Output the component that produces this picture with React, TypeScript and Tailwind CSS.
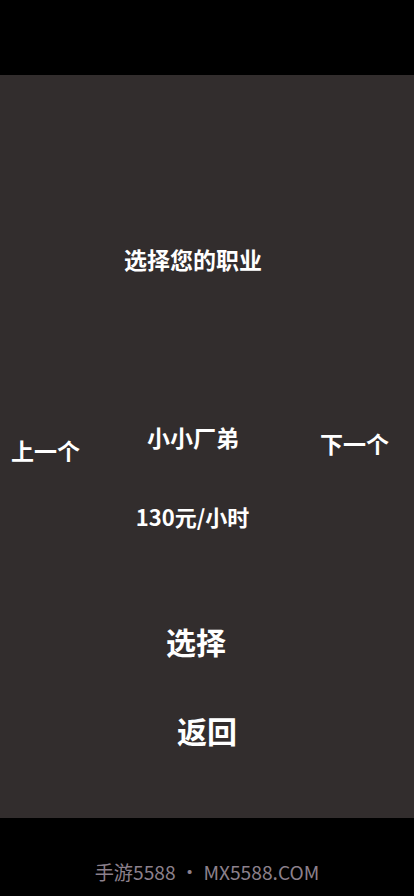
import React from "react";

const cjk = { fontFamily: '"Noto Sans CJK SC", "Noto Sans", sans-serif' };

export default function App() {
  return (
    <div className="w-[414px] h-[896px] bg-black flex flex-col overflow-hidden" style={cjk}>
      <div className="h-[75px] bg-black shrink-0" />
      <div className="h-[743px] bg-[#322d2d] shrink-0 flex flex-col text-white font-bold">
        <div className="mt-[173px] flex justify-center pr-[28px] text-[23px] leading-[23px]">选择您的职业</div>
        <div className="mt-[155px] flex items-start pl-[11px] text-[23px] leading-[23px]">
          <div className="mt-[13px] w-[69px]">上一个</div>
          <div className="ml-[67px] w-[92px]">小小厂弟</div>
          <div className="mt-[6px] ml-[81px]">下一个</div>
        </div>
        <div className="mt-[43px] flex justify-center pr-[29px] text-[22px] leading-[22px]">130元/小时</div>
        <div className="mt-[99px] flex justify-center pr-[22px] text-[30px] leading-[30px]">选择</div>
        <div className="mt-[59px] flex justify-center text-[30px] leading-[30px]">返回</div>
      </div>
      <div className="flex-1 bg-black flex justify-center pt-[44px]">
        <div className="text-[19.2px] leading-[20px] text-[#8c808c]">手游5588 • MX5588.COM</div>
      </div>
    </div>
  );
}
